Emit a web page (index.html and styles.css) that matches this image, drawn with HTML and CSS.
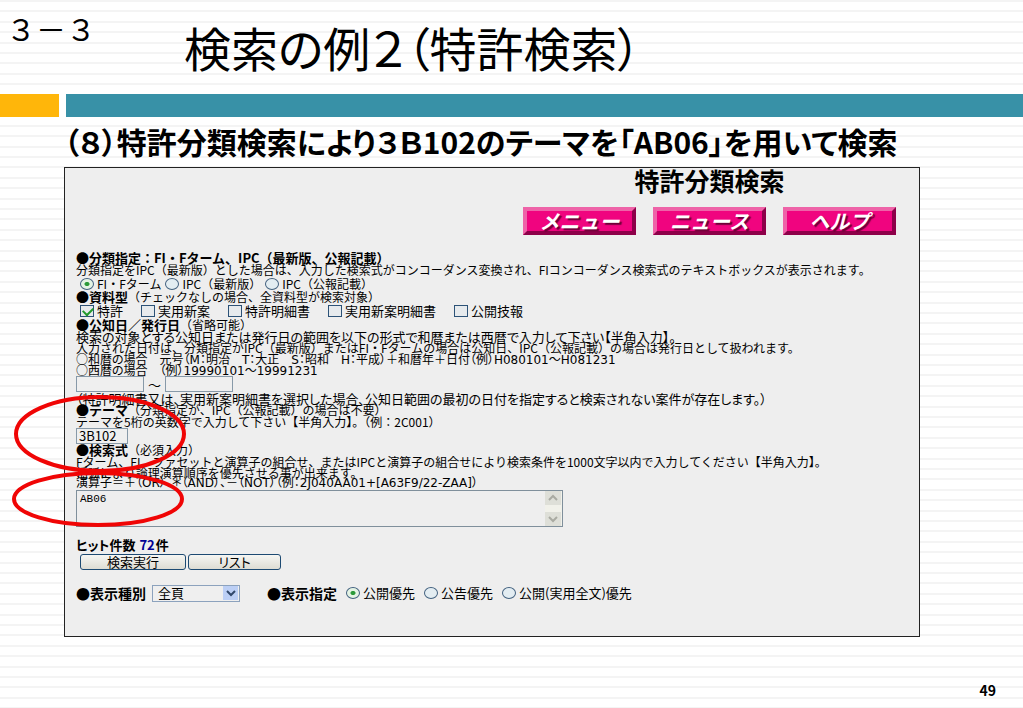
FILE: index.html
```html
<!DOCTYPE html>
<html lang="ja">
<head>
<meta charset="utf-8">
<title>検索の例２（特許検索）</title>
<link rel="stylesheet" href="styles.css">
</head>
<body>
<main class="slide">
  <header class="slide-head">
    <p class="section-no">３－３</p>
    <h1 class="slide-title">検索の例２（特許検索）</h1>
  </header>
  <div class="band"><span class="band-accent"></span><span class="band-main"></span></div>
  <h2 class="slide-sub">（８）特許分類検索により３Ｂ102のテーマを「AB06」を用いて検索</h2>

  <section class="panel">
    <div class="panel-head">
      <h3 class="panel-title">特許分類検索</h3>
      <nav class="nav">
        <button class="nav-btn" type="button">メニュー</button>
        <button class="nav-btn" type="button">ニュース</button>
        <button class="nav-btn" type="button">ヘルプ</button>
      </nav>
    </div>

    <form class="form">
      <h4 class="head">●分類指定：FI・Fターム、IPC（最新版、公報記載）</h4>
      <p class="line lead">分類指定をIPC（最新版）とした場合は、入力した検索式がコンコーダンス変換され、FIコンコーダンス検索式のテキストボックスが表示されます。</p>
      <div class="options radios">
        <label class="opt"><input class="radio" type="radio" name="cls" checked>FI・Fターム</label>
        <label class="opt"><input class="radio" type="radio" name="cls">IPC（最新版）</label>
        <label class="opt"><input class="radio" type="radio" name="cls">IPC（公報記載）</label>
      </div>
      <h4 class="head">●資料型<span class="note">（チェックなしの場合、全資料型が検索対象）</span></h4>
      <div class="options checks">
        <label class="opt"><input class="check" type="checkbox" checked>特許</label>
        <label class="opt"><input class="check" type="checkbox">実用新案</label>
        <label class="opt"><input class="check" type="checkbox">特許明細書</label>
        <label class="opt"><input class="check" type="checkbox">実用新案明細書</label>
        <label class="opt"><input class="check" type="checkbox">公開技報</label>
      </div>
      <h4 class="head">●公知日／発行日<span class="note">（省略可能）</span></h4>
      <p class="line wide">検索の対象とする公知日または発行日の範囲を以下の形式で和暦または西暦で入力して下さい【半角入力】。</p>
      <p class="line">入力された日付は、分類指定がIPC（最新版）またはFI・Fタームの場合は公知日、IPC（公報記載）の場合は発行日として扱われます。</p>
      <p class="line codes"><span class="ring">○</span>和暦の場合　元号（M：明治　T：大正　S：昭和　H：平成）＋和暦年＋日付（例）H080101～H081231</p>
      <p class="line codes"><span class="ring">○</span>西暦の場合　（例）19990101～19991231</p>
      <div class="dates">
        <input class="field date" type="text" aria-label="開始日"><span>～</span><input class="field date" type="text" aria-label="終了日">
      </div>
      <p class="line wide">（特許明細書又は、実用新案明細書を選択した場合、公知日範囲の最初の日付を指定すると検索されない案件が存在します。）</p>
      <h4 class="head">●テーマ<span class="note">（分類指定が、IPC（公報記載）の場合は不要）</span></h4>
      <p class="line">テーマを5桁の英数字で入力して下さい【半角入力】。（例：2C001）</p>
      <div class="theme-row"><input class="field theme" type="text" value="3B102" aria-label="テーマ"></div>
      <h4 class="head">●検索式<span class="note">（必須入力）</span></h4>
      <p class="line">Fターム、FI、ファセットと演算子の組合せ、またはIPCと演算子の組合せにより検索条件を1000文字以内で入力してください【半角入力】。</p>
      <p class="line">括弧により論理演算順序を優先させる事が出来ます。</p>
      <p class="line codes">演算子＝＋（OR）、＊（AND）、－（NOT）（例：2J040AA01+[A63F9/22-ZAA]）</p>
      <div class="query">
        <textarea class="query-text" aria-label="検索式">AB06</textarea>
        <div class="bar">
          <svg class="bar-btn" viewBox="0 0 16 14"><path d="M4 9l4-4 4 4"/></svg>
          <svg class="bar-btn" viewBox="0 0 16 14"><path d="M4 5l4 4 4-4"/></svg>
        </div>
      </div>
      <p class="hits">ヒット件数 <span class="count">72</span>件</p>
      <div class="actions">
        <button class="act run" type="button">検索実行</button>
        <button class="act list" type="button">リスト</button>
      </div>
      <div class="display">
        <label class="display-label" for="kind">●表示種別</label>
        <div class="pick">
          <select class="pick-box" id="kind"><option>全頁</option></select>
          <svg class="pick-arrow" viewBox="0 0 15 14"><path d="M4 5l4 4 4-4"/></svg>
        </div>
        <span class="display-label spec">●表示指定</span>
        <div class="options prefs">
          <label class="opt"><input class="radio" type="radio" name="pref" checked>公開優先</label>
          <label class="opt"><input class="radio" type="radio" name="pref">公告優先</label>
          <label class="opt"><input class="radio" type="radio" name="pref">公開(実用全文)優先</label>
        </div>
      </div>
    </form>

    <svg class="marks" viewBox="0 0 176 136" aria-hidden="true">
      <ellipse cx="89" cy="40" rx="84" ry="37"/>
      <ellipse cx="87" cy="105" rx="84" ry="26"/>
    </svg>
  </section>

  <footer class="page-no">49</footer>
</main>
</body>
</html>
```
FILE: styles.css
```css
* { box-sizing: border-box; }

body {
  margin: 0;
  background: #fff;
  color: #000;
  font-family: "Noto Sans CJK JP", sans-serif;
}

h1, h2, h3, h4, p { margin: 0; }

button, input, select, textarea { font: inherit; color: inherit; }

.slide {
  min-height: 100vh;
  display: flex;
  flex-direction: column;
  background: repeating-linear-gradient(
    #f4f4f4 0 2px, #fff 2px 10px,
    #f4f4f4 10px 12px, #fff 12px 21px,
    #f4f4f4 21px 23px, #fff 23px 31px,
    #f4f4f4 31px 33px, #fff 33px 42px,
    #f4f4f4 42px 44px, #fff 44px 52px);
}

.slide-head {
  display: flex;
  align-items: flex-start;
  gap: 88px;
  height: 94px;
  padding-left: 6px;
}

.section-no {
  padding-top: 6px;
  font-size: 30px;
  line-height: 44px;
}

.slide-title {
  padding-top: 11px;
  font-size: 47px;
  font-weight: 400;
  line-height: 72px;
  font-feature-settings: "palt";
}

.band { display: flex; gap: 7px; height: 23px; background: #fff; }
.band-accent { width: 59px; background: #ffb60a; }
.band-main { flex: 1; background: #3891a7; }

.slide-sub {
  padding: 0 0 2px 64px;
  font-size: 30px;
  line-height: 48px;
  font-weight: 700;
  white-space: nowrap;
  font-feature-settings: "palt";
}

.panel {
  position: relative;
  margin: 0 103px 0 64px;
  padding: 0 23px 34px 11px;
  border: 1px solid #222;
  background: #eee;
  font-size: 12px;
}

.panel-head {
  display: flex;
  flex-direction: column;
  align-items: center;
  width: fit-content;
  margin-left: auto;
}

.panel-title { font-size: 25px; line-height: 24px; }

.nav { display: flex; gap: 17px; margin-top: 15px; }

.nav-btn {
  width: 113px;
  height: 28px;
  padding: 0;
  border: 4px solid;
  border-color: #ee63a8 #8d0049 #8d0049 #ee63a8;
  background: #f0047f;
  color: #fff;
  font-size: 20px;
  font-weight: 700;
  font-style: italic;
  line-height: 18px;
  text-shadow: 2px 2px 1px #6d0038;
}

.form { margin-top: 17px; white-space: nowrap; }

.head { font-size: 13px; line-height: 12px; font-weight: 700; }
.note { font-size: 12px; font-weight: 400; }
.line { height: 11px; line-height: 11px; }
.lead { height: 12px; line-height: 12px; }
.wide { font-size: 13px; font-feature-settings: "palt"; }
.codes {
  font-family: "DejaVu Sans", "Noto Sans CJK JP", sans-serif;
  font-feature-settings: "palt";
}
.ring { font-family: "Noto Sans CJK JP", sans-serif; }

.options { display: flex; align-items: center; padding-left: 4px; }
.radios { height: 15px; gap: 4px; }
.checks { height: 16px; gap: 18px; font-size: 13px; }
.prefs { gap: 9px; padding-left: 0; font-size: 13px; }
.opt { display: flex; align-items: center; gap: 3px; line-height: 14px; }

.radio {
  appearance: none;
  width: 14px;
  height: 12px;
  margin: 0;
  border: 1px solid #42617f;
  border-radius: 50%;
  background: #e3edf2;
}
.radio:checked { background: radial-gradient(ellipse, #2c9a3a 0 2px, #e4f3e4 3px); }

.check {
  appearance: none;
  position: relative;
  width: 14px;
  height: 12px;
  margin: 0;
  border: 1px solid #2c5277;
  background: #e6eaed;
}
.check:checked::after {
  content: "";
  position: absolute;
  left: 2px;
  top: 1px;
  width: 8px;
  height: 5px;
  border: solid #229a2c;
  border-width: 0 0 2px 2px;
  transform: rotate(-45deg);
}

.dates { display: flex; align-items: center; gap: 4px; height: 18px; font-size: 13px; }
.field {
  height: 16px;
  padding: 0 2px;
  border: 1px solid #8799a8;
  background: #efefef;
}
.date { width: 68px; }
.theme-row { display: flex; align-items: center; height: 17px; font-size: 13px; }
.theme { width: 52px; line-height: 13px; }

.query {
  display: flex;
  width: 487px;
  height: 37px;
  margin-top: 1px;
  border: 1px solid #7f8f9b;
}
.query-text {
  flex: 1;
  padding: 2px 3px;
  border: 0;
  background: transparent;
  resize: none;
  overflow: hidden;
  font: 11px/12px "Liberation Mono", monospace;
}
.bar { display: flex; flex-direction: column; justify-content: space-between; width: 17px; background: #f1f1ea; }
.bar-btn { width: 16px; height: 14px; background: #dedfd8; }
.bar-btn path { fill: none; stroke: #a9aaa2; stroke-width: 2; }

.hits { margin-top: 10px; font-size: 13px; line-height: 16px; font-weight: 700; font-feature-settings: "palt"; }
.count { margin: 0 1px; color: #000094; }

.actions { display: flex; gap: 2px; padding-left: 4px; margin-top: 1px; font-size: 13px; }
.act {
  height: 16px;
  padding: 0;
  border: 1px solid #1d4a72;
  border-radius: 3px;
  background: linear-gradient(#f6f6f3, #dddcd3);
  line-height: 14px;
}
.run { width: 106px; }
.list { width: 93px; font-feature-settings: "palt"; }

.display { display: flex; align-items: center; height: 18px; margin-top: 14px; }
.display-label { font-size: 14px; font-weight: 700; line-height: 16px; }
.spec { margin: 0 9px 0 27px; }
.pick { position: relative; width: 88px; height: 17px; margin-left: 6px; font-size: 13px; }
.pick-box {
  appearance: none;
  display: block;
  width: 100%;
  height: 100%;
  padding: 0 5px;
  border: 1px solid #8ca2bd;
  border-radius: 0;
  background: #efefef;
  line-height: 14px;
}
.pick-arrow {
  position: absolute;
  top: 1px;
  right: 2px;
  width: 15px;
  height: 14px;
  background: #bccff5;
  pointer-events: none;
}
.pick-arrow path { fill: none; stroke: #31486b; stroke-width: 2; }

.marks {
  position: absolute;
  left: -54px;
  top: 226px;
  width: 176px;
  height: 136px;
  overflow: visible;
  pointer-events: none;
}
.marks ellipse { fill: none; stroke: #f00505; stroke-width: 4; }

.page-no {
  margin-top: auto;
  padding: 0 27px 8px 0;
  text-align: right;
  font-size: 14px;
  line-height: 20px;
  font-weight: 700;
}
```
